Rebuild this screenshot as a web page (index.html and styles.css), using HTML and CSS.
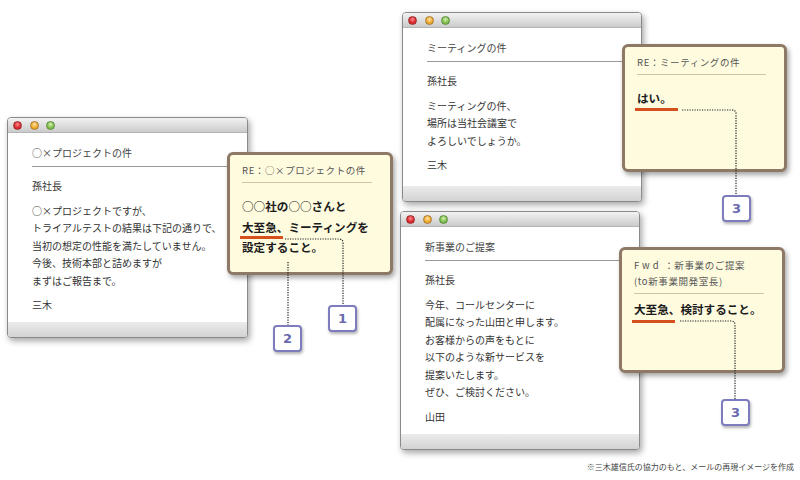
FILE: index.html
```html
<!DOCTYPE html>
<html lang="ja">
<head>
    <meta charset="UTF-8">
    <title>メールの再現イメージ</title>
    <link rel="stylesheet" href="styles.css">
</head>
<body>
<div class="stage">

    <!-- 左のメール -->
    <div class="win win-a">
        <div class="titlebar"><span class="dot red"></span><span class="dot amber"></span><span class="dot green"></span></div>
        <div class="mail">
            <div class="subject">○×プロジェクトの件</div>
            <p class="to">孫社長</p>
            <p class="text">○×プロジェクトですが、<br>トライアルテストの結果は下記の通りで、<br>当初の想定の性能を満たしていません。<br>今後、技術本部と詰めますが<br>まずはご報告まで。</p>
            <p class="from">三木</p>
        </div>
        <div class="statusbar"></div>
    </div>

    <!-- 右上のメール -->
    <div class="win win-b">
        <div class="titlebar"><span class="dot red"></span><span class="dot amber"></span><span class="dot green"></span></div>
        <div class="mail">
            <div class="subject">ミーティングの件</div>
            <p class="to">孫社長</p>
            <p class="text">ミーティングの件、<br>場所は当社会議室で<br>よろしいでしょうか。</p>
            <p class="from">三木</p>
        </div>
        <div class="statusbar"></div>
    </div>

    <!-- 右下のメール -->
    <div class="win win-c">
        <div class="titlebar"><span class="dot red"></span><span class="dot amber"></span><span class="dot green"></span></div>
        <div class="mail">
            <div class="subject">新事業のご提案</div>
            <p class="to">孫社長</p>
            <p class="text">今年、コールセンターに<br>配属になった山田と申します。<br>お客様からの声をもとに<br>以下のような新サービスを<br>提案いたします。<br>ぜひ、ご検討ください。</p>
            <p class="from">山田</p>
        </div>
        <div class="statusbar"></div>
    </div>

    <!-- 返信メモ -->
    <div class="reply reply-a">
        <div class="reply-head">RE：○×プロジェクトの件</div>
        <p class="reply-text">○○社の○○さんと<br><span class="mark">大至急</span>、ミーティングを<br>設定すること。</p>
    </div>

    <div class="reply reply-b">
        <div class="reply-head">RE：ミーティングの件</div>
        <p class="reply-text"><span class="mark">はい。</span></p>
    </div>

    <div class="reply reply-c">
        <div class="reply-head"><span class="latin">Fwd</span> ：新事業のご提案<br>(to新事業開発室長)</div>
        <p class="reply-text tight"><span class="mark">大至急</span>、検討すること。</p>
    </div>

    <svg class="leaders" width="800" height="480" viewBox="0 0 800 480">
        <path d="M285 239 H339 Q343 239 343 243 V305" />
        <path d="M288 262 V325" />
        <path d="M682 110 H732 Q736 110 736 114 V195" />
        <path d="M680 321 H731 Q735 321 735 325 V399" />
    </svg>

    <div class="num num-1">1</div>
    <div class="num num-2">2</div>
    <div class="num num-3a">3</div>
    <div class="num num-3b">3</div>

    <div class="note">※三木雄信氏の協力のもと、メールの再現イメージを作成</div>
</div>
</body>
</html>
```

FILE: styles.css
```css
body {
    margin: 0;
    background: #fff;
    font-family: "Noto Sans CJK JP", "Noto Sans", sans-serif;
    color: #333;
}
.stage {
    position: relative;
    width: 800px;
    height: 480px;
    overflow: hidden;
}

/* メールウィンドウ */
.win {
    position: absolute;
    box-sizing: border-box;
    display: flex;
    flex-direction: column;
    background: #fff;
    border: 1px solid #8a8a8a;
    border-radius: 4px;
    box-shadow: 2px 3px 6px rgba(0,0,0,0.35);
    overflow: hidden;
}
.win-a { left: 7px; top: 117px; width: 241px; height: 221px; }
.win-b { left: 402px; top: 12px; width: 240px; height: 190px; }
.win-c { left: 400px; top: 211px; width: 240px; height: 239px; }

.titlebar {
    height: 15px;
    flex: none;
    display: flex;
    align-items: center;
    gap: 7.5px;
    padding-left: 5px;
    background: linear-gradient(#f2f2f2, #cbcbcb);
    border-bottom: 1px solid #b5b5b5;
    box-sizing: border-box;
}
.dot {
    width: 9px;
    height: 9px;
    border-radius: 50%;
    box-sizing: border-box;
}
.dot.red { background: radial-gradient(circle at 50% 35%, #ff8a8a, #d9252e 60%); border: 1px solid #9a2a2a; }
.dot.amber { background: radial-gradient(circle at 50% 35%, #ffe3a0, #efa72c 60%); border: 1px solid #a8772a; }
.dot.green { background: radial-gradient(circle at 50% 35%, #d6f2b0, #7cbc4a 60%); border: 1px solid #5b8a3c; }

.mail {
    flex: 1;
    padding: 13px 0 0 24px;
    font-size: 10px;
    line-height: 17.5px;
}
.subject {
    line-height: 14px;
    padding-bottom: 6px;
    border-bottom: 1px solid #999;
    color: #444;
}
.mail p {
    margin: 0;
}
.to {
    margin-top: 10px !important;
}
.text, .from {
    margin-top: 7px !important;
}
.statusbar {
    height: 15px;
    flex: none;
    background: linear-gradient(#ececec, #d2d2d2);
}

/* 返信メモ */
.reply {
    position: absolute;
    box-sizing: border-box;
    background: #fffbdf;
    border: 3px solid #8d7966;
    border-radius: 6px;
    box-shadow: 2px 3px 5px rgba(0,0,0,0.35);
    padding: 7px 18px 0 12px;
    white-space: nowrap;
}
.reply-a { left: 227px; top: 152px; width: 166px; height: 123px; }
.reply-b { left: 622px; top: 44px; width: 165px; height: 128px; }
.reply-c { left: 619px; top: 247px; width: 166px; height: 126px; }

.reply-head {
    font-size: 9.5px;
    line-height: 16px;
    letter-spacing: 0.6px;
    color: #555;
    padding-bottom: 4px;
    border-bottom: 1px solid #cfc5a6;
}
.latin {
    letter-spacing: 3px;
}
.reply-text {
    margin: 13px 0 0;
    font-size: 11.6px;
    line-height: 20.5px;
    font-weight: bold;
    color: #1c1c1c;
}
.reply-text.tight {
    margin-top: 5px;
}
.mark {
    position: relative;
}
.mark::after {
    content: "";
    position: absolute;
    left: -2px;
    right: -6px;
    bottom: -4.5px;
    height: 3px;
    background: #d5501d;
}
.reply-a .mark::after { bottom: -4px; }
.reply-c .mark::after { bottom: -6px; }

/* 引き出し線と番号 */
.leaders {
    position: absolute;
    left: 0;
    top: 0;
    pointer-events: none;
}
.leaders path {
    fill: none;
    stroke: #222;
    stroke-width: 1.2;
    stroke-dasharray: 1.2 1.3;
}
.num {
    position: absolute;
    box-sizing: border-box;
    width: 29px;
    height: 27px;
    background: #fff;
    border: 2px solid #7c7cbe;
    border-radius: 4px;
    box-shadow: 1px 2px 3px rgba(0,0,0,0.3);
    color: #6a6aae;
    font-family: "DejaVu Sans", sans-serif;
    font-weight: bold;
    font-size: 13px;
    line-height: 23px;
    text-align: center;
}
.num-1 { left: 328px; top: 305px; }
.num-2 { left: 273px; top: 325px; }
.num-3a { left: 722px; top: 195px; }
.num-3b { left: 721px; top: 399px; }

.note {
    position: absolute;
    right: 6px;
    top: 461px;
    font-size: 8px;
    line-height: 12px;
    color: #444;
}
```
